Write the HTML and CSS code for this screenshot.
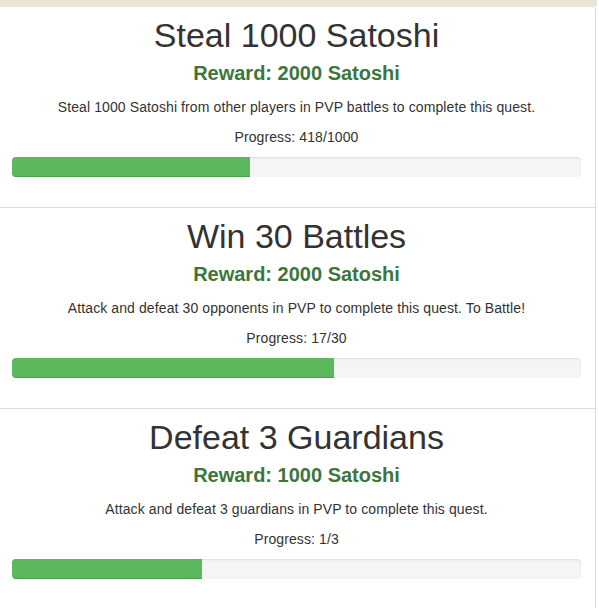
FILE: index.html
```html
<!DOCTYPE html>
<html>
<head>
<meta charset="utf-8">
<link rel="stylesheet" href="styles.css">
</head>
<body>
<div class="topband"></div>
<div class="panel">
  <div class="quest">
    <h1 class="title">Steal 1000 Satoshi</h1>
    <h4 class="reward">Reward: 2000 Satoshi</h4>
    <p class="desc">Steal 1000 Satoshi from other players in PVP battles to complete this quest.</p>
    <p class="desc">Progress: 418/1000</p>
    <div class="progress"><div class="bar" style="width: 41.8%"></div></div>
  </div>
  <div class="quest">
    <h1 class="title">Win 30 Battles</h1>
    <h4 class="reward">Reward: 2000 Satoshi</h4>
    <p class="desc">Attack and defeat 30 opponents in PVP to complete this quest. To Battle!</p>
    <p class="desc">Progress: 17/30</p>
    <div class="progress"><div class="bar" style="width: 56.67%"></div></div>
  </div>
  <div class="quest last">
    <h1 class="title">Defeat 3 Guardians</h1>
    <h4 class="reward">Reward: 1000 Satoshi</h4>
    <p class="desc">Attack and defeat 3 guardians in PVP to complete this quest.</p>
    <p class="desc">Progress: 1/3</p>
    <div class="progress"><div class="bar" style="width: 33.33%"></div></div>
  </div>
</div>
</body>
</html>
```

FILE: styles.css
```css
html, body {
  margin: 0;
  padding: 0;
  background: #ffffff;
}
body {
  font-family: "Liberation Sans", Arial, sans-serif;
  color: #333333;
  font-size: 14px;
  line-height: 20px;
}
.topband {
  height: 6px;
  width: 597px;
  background: #ece4d3;
}
.panel {
  width: 596px;
  box-sizing: border-box;
  background: #ffffff;
  border-top: 1px solid #e3e3e3;
  border-right: 1px solid #d9d9d9;
  border-top-right-radius: 4px;
}
.quest {
  padding: 9px 14px 30px 12px;
  border-bottom: 1px solid #dddddd;
  text-align: center;
}
.quest.last {
  border-bottom: none;
  padding-bottom: 29px;
}
.title {
  margin: 0;
  font-size: 34px;
  line-height: 38px;
  font-weight: normal;
  color: #333333;
}
.reward {
  margin: 7px 0 12px;
  font-size: 20px;
  line-height: 24px;
  font-weight: bold;
  color: #3c763d;
}
.desc {
  margin: 0 0 10px;
  letter-spacing: 0.1px;
}
.progress {
  height: 20px;
  border-radius: 4px;
  background: #f5f5f5;
  box-shadow: inset 0 1px 2px rgba(0,0,0,0.1);
  overflow: hidden;
}
.bar {
  height: 100%;
  background: #5cb85c;
  box-shadow: inset 0 -1px 0 rgba(0,0,0,0.15);
}
```
